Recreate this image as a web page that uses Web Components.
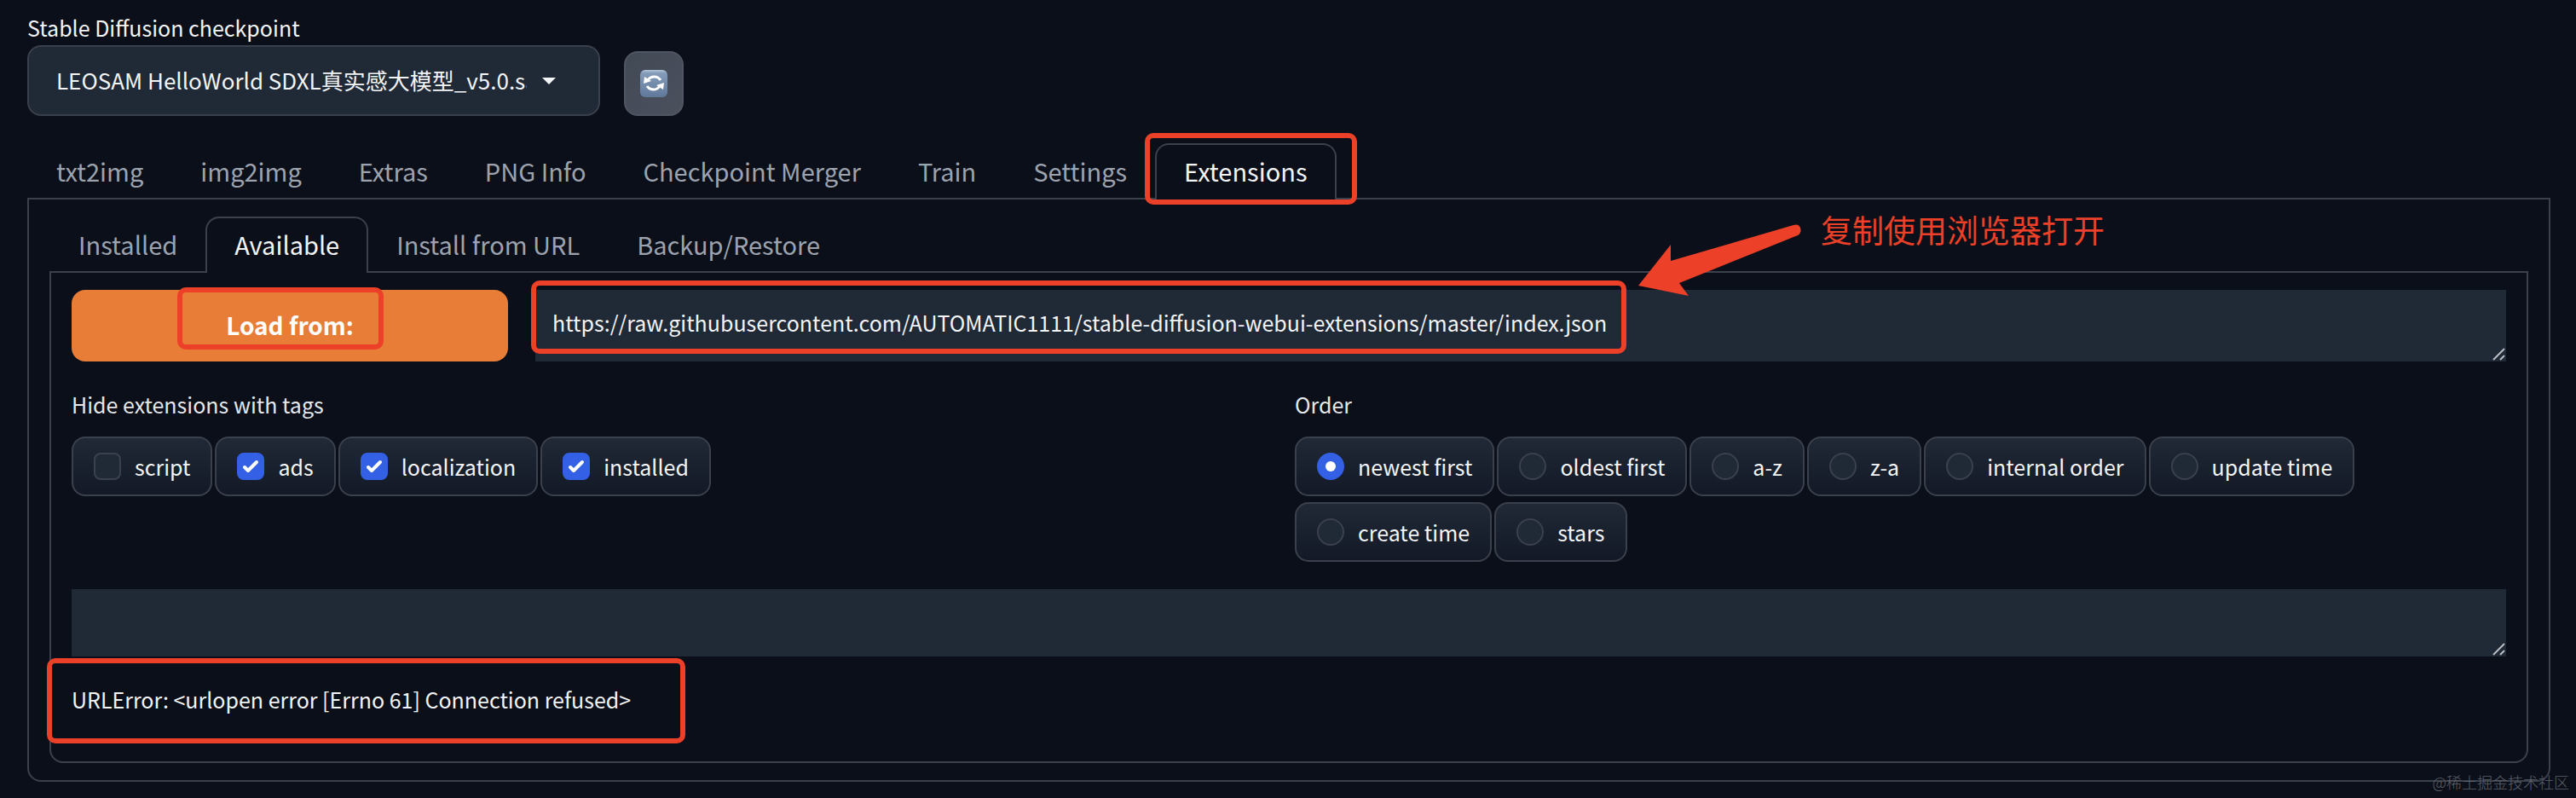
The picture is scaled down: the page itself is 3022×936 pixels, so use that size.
<!DOCTYPE html>
<html lang="en">
<head>
<meta charset="utf-8">
<title>Stable Diffusion</title>
<style>
:root {
    --bg: #0b0f19;
    --field: #202936;
    --line: #3b414c;
    --text: #f3f4f6;
    --muted: #9ca3af;
    --accent: #3360e4;
    --primary: #e87d37;
    --callout: #ec4028;
}
body {
    margin: 0;
    min-height: 100vh;
    background: var(--bg);
    color: var(--text);
    font: 25px/36px "Noto Sans CJK SC", sans-serif;
}
</style>
</head>
<body>
<sd-app></sd-app>

<script>
function attach(element, html) {
    const template = document.createElement("template")
    template.innerHTML = html
    element.attachShadow({ mode: "open" })
    element.shadowRoot.appendChild(template.content.cloneNode(true))
}

// Red frame drawn over whatever positioned box holds it
class CalloutBox extends HTMLElement {
    constructor() {
        super()
        attach(this, `
            <style>
            :host {
                position: absolute;
                box-sizing: border-box;
                border: 6px solid var(--callout);
                border-radius: 10px;
                pointer-events: none;
                z-index: 2;
            }
            </style>
        `)
    }
}

class CalloutNote extends HTMLElement {
    constructor() {
        super()
        attach(this, `
            <style>
            :host {
                position: absolute;
                display: flex;
                align-items: flex-start;
                gap: 22px;
                color: var(--callout);
                font-size: 37px;
                line-height: 44px;
                white-space: nowrap;
                pointer-events: none;
                z-index: 2;
            }
            svg {
                margin-top: 16px;
            }
            </style>
            <svg width="192" height="84" viewBox="0 0 192 84" fill="currentColor" aria-hidden="true">
                <path d="M0 72 38 24 38 43 182 1Q188-1 190 4 192 10 187 13L48 69 59 84Z"/>
            </svg>
            <slot></slot>
        `)
    }
}

class UiSelect extends HTMLElement {
    constructor() {
        super()
        attach(this, `
            <style>
            :host {
                display: flex;
                flex-direction: column;
                gap: 3px;
                flex: 0 0 672px;
            }
            .box {
                display: grid;
                align-items: center;
                height: 83px;
                box-sizing: border-box;
                border: 2px solid var(--line);
                border-radius: 16px;
                background: var(--field);
            }
            select, svg {
                grid-area: 1 / 1;
            }
            select {
                appearance: none;
                height: 100%;
                min-width: 0;
                margin: 0 84px 0 32px;
                padding: 0 0 2px;
                border: 0;
                outline: 0;
                background: none;
                color: inherit;
                font: inherit;
                font-size: 26px;
            }
            svg {
                justify-self: end;
                margin-right: 50px;
                pointer-events: none;
            }
            </style>
            <label for="select"></label>
            <div class="box">
                <select id="select"><option></option></select>
                <svg width="16" height="8" viewBox="0 0 16 8" fill="currentColor" aria-hidden="true"><path d="M0 0H16L8 8Z"/></svg>
            </div>
        `)
        this.shadowRoot.querySelector("label").textContent = this.getAttribute("label")
        this.shadowRoot.querySelector("option").textContent = this.getAttribute("value")
    }
}

class RefreshButton extends HTMLElement {
    constructor() {
        super()
        attach(this, `
            <style>
            :host {
                display: block;
            }
            button {
                display: grid;
                place-items: center;
                width: 70px;
                height: 76px;
                padding: 0;
                border: 2px solid #4f5562;
                border-radius: 16px;
                background: linear-gradient(to bottom right, #424a56, #4b505d);
            }
            </style>
            <button aria-label="Refresh">
                <svg width="32" height="32" viewBox="0 0 32 32" fill="none">
                    <defs>
                        <linearGradient id="tile" x2="0" y2="1">
                            <stop stop-color="#b4c6d8"/>
                            <stop offset=".12" stop-color="#849bb8"/>
                            <stop offset="1" stop-color="#60789a"/>
                        </linearGradient>
                    </defs>
                    <rect width="32" height="32" rx="6" fill="url(#tile)"/>
                    <path d="M24 12A9 9 0 0 0 9 12M8 19A9 9 0 0 0 23 19" stroke="#fff" stroke-width="3"/>
                    <path d="M4 16 5 8 13 13ZM28 15 27 23 19 18Z" fill="#fff"/>
                </svg>
            </button>
        `)
    }
}

class UiTab extends HTMLElement {
    constructor() {
        super()
        attach(this, `
            <style>
            :host {
                display: block;
                position: relative;
                margin-right: -1px;
            }
            button {
                height: 66px;
                margin: 0;
                padding: 0 32px 4px;
                border: 2px solid transparent;
                border-bottom: 0;
                border-radius: 16px 16px 0 0;
                background: none;
                color: var(--muted);
                font: inherit;
                white-space: nowrap;
            }
            :host([selected]) button {
                border-color: var(--line);
                background: var(--bg);
                color: var(--text);
            }
            </style>
            <button role="tab"><slot></slot></button>
            <slot name="callout"></slot>
        `)
        this.shadowRoot.querySelector("button").setAttribute("aria-selected", this.hasAttribute("selected"))
    }
}

// A row of tabs that sits on the top edge of its framed panel
class UiTabs extends HTMLElement {
    constructor() {
        super()
        attach(this, `
            <style>
            :host {
                display: block;
            }
            nav {
                display: flex;
                position: relative;
                margin-bottom: -2px;
                font-size: 29px;
            }
            section {
                padding: 20px 24px;
                border: 2px solid var(--line);
                border-radius: 0 0 16px 16px;
            }
            </style>
            <nav role="tablist"><slot name="tab"></slot></nav>
            <section><slot></slot></section>
        `)
    }
}

class UiTextbox extends HTMLElement {
    constructor() {
        super()
        attach(this, `
            <style>
            :host {
                display: grid;
                position: relative;
            }
            textarea, svg {
                grid-area: 1 / 1;
            }
            textarea {
                box-sizing: border-box;
                width: 100%;
                height: var(--height, 84px);
                margin: 0;
                padding: 20px;
                border: 0;
                outline: 0;
                resize: none;
                overflow: hidden;
                background: var(--field);
                color: inherit;
                font: inherit;
            }
            svg {
                place-self: end;
                margin: 1px;
                pointer-events: none;
            }
            </style>
            <textarea></textarea>
            <svg width="15" height="15" viewBox="0 0 15 15" stroke="#b9bdc4" stroke-width="2" aria-hidden="true"><path d="M1 14 14 1M9 14 14 9"/></svg>
            <slot></slot>
        `)
        const area = this.shadowRoot.querySelector("textarea")
        area.value = this.getAttribute("value") || ""
        area.setAttribute("aria-label", this.getAttribute("label"))
    }
}

class LoadButton extends HTMLElement {
    constructor() {
        super()
        attach(this, `
            <style>
            :host {
                display: block;
                position: relative;
                flex: 0 0 512px;
            }
            button {
                width: 100%;
                height: 84px;
                padding: 0 0 2px;
                border: 0;
                border-radius: 16px;
                background: var(--primary);
                color: #fff;
                font: inherit;
                font-size: 28px;
                font-weight: 700;
            }
            </style>
            <button><slot></slot></button>
            <slot name="callout"></slot>
        `)
    }
}

class ChoiceGroup extends HTMLElement {
    constructor() {
        super()
        attach(this, `
            <style>
            :host {
                display: block;
                flex: 1 1 0;
                min-width: 0;
            }
            fieldset {
                min-width: 0;
                margin: 0;
                padding: 0;
                border: 0;
            }
            legend {
                margin-bottom: 20px;
                padding: 0;
                color: #e5e7eb;
            }
            .row {
                display: flex;
                flex-wrap: wrap;
                gap: 7px 3px;
            }
            label {
                display: flex;
                align-items: center;
                gap: 16px;
                height: 70px;
                box-sizing: border-box;
                padding: 0 24px;
                border: 2px solid var(--line);
                border-radius: 16px;
                background: linear-gradient(#212936, #131926);
            }
            .mark {
                display: grid;
            }
            .mark > * {
                grid-area: 1 / 1;
            }
            input {
                appearance: none;
                box-sizing: border-box;
                width: 32px;
                height: 32px;
                margin: 0;
                border: 2px solid var(--line);
                border-radius: 8px;
                background: var(--field);
            }
            input[type=radio] {
                border-radius: 50%;
            }
            input:checked {
                border-color: var(--accent);
                background: var(--accent);
            }
            svg {
                display: none;
                pointer-events: none;
            }
            input:checked + svg {
                display: block;
            }
            </style>
            <fieldset>
                <legend></legend>
                <div class="row"></div>
            </fieldset>
        `)
        const type = this.getAttribute("type")
        const checked = this.getAttribute("checked").split(",")
        const icon = type === "radio"
            ? `<circle cx="16" cy="16" r="6" fill="#fff"/>`
            : `<path d="M9 17 13 21 23 11" fill="none" stroke="#fff" stroke-width="4" stroke-linecap="round" stroke-linejoin="round"/>`
        this.shadowRoot.querySelector("legend").textContent = this.getAttribute("label")
        const row = this.shadowRoot.querySelector(".row")
        this.getAttribute("options").split(",").forEach(name => {
            const label = document.createElement("label")
            label.innerHTML = `
                <span class="mark">
                    <input type="${type}" name="choice" value="${name}">
                    <svg width="32" height="32" viewBox="0 0 32 32" aria-hidden="true">${icon}</svg>
                </span>
                <span>${name}</span>
            `
            label.querySelector("input").checked = checked.includes(name)
            row.appendChild(label)
        })
    }
}

class SdApp extends HTMLElement {
    constructor() {
        super()
        attach(this, `
            <style>
            :host {
                display: block;
                position: relative;
                box-sizing: border-box;
                min-height: 100vh;
                padding: 14px 30px 19px 32px;
            }
            header {
                display: flex;
                align-items: flex-end;
                gap: 28px;
                margin-bottom: 32px;
            }
            .load, .filters {
                display: flex;
            }
            .load {
                position: relative;
                gap: 32px;
                margin-bottom: 32px;
            }
            .load ui-textbox {
                flex: 1;
            }
            .filters {
                gap: 14px;
                margin-bottom: 32px;
            }
            .log {
                --height: 79px;
            }
            .error {
                position: relative;
                margin: 32px 0 35px;
            }
            .watermark {
                position: absolute;
                right: 8px;
                bottom: 7px;
                color: #5b5f67;
                font-size: 18px;
                font-weight: 300;
                line-height: 24px;
            }
            .on-tab { inset: -12px -24px -6px -12px; }
            .on-load { inset: -3px 146px 14px 124px; }
            .on-url { top: -11px; bottom: 9px; left: -5px; width: 1285px; }
            .on-error { top: -30px; bottom: -34px; left: -29px; width: 749px; }
            .note { top: -93px; left: 1838px; }
            </style>
            <header>
                <ui-select label="Stable Diffusion checkpoint" value="LEOSAM HelloWorld SDXL真实感大模型_v5.0.safetensors"></ui-select>
                <refresh-button></refresh-button>
            </header>
            <ui-tabs>
                <ui-tab slot="tab">txt2img</ui-tab>
                <ui-tab slot="tab">img2img</ui-tab>
                <ui-tab slot="tab">Extras</ui-tab>
                <ui-tab slot="tab">PNG Info</ui-tab>
                <ui-tab slot="tab">Checkpoint Merger</ui-tab>
                <ui-tab slot="tab">Train</ui-tab>
                <ui-tab slot="tab">Settings</ui-tab>
                <ui-tab slot="tab" selected>Extensions<callout-box slot="callout" class="on-tab"></callout-box></ui-tab>
                <ui-tabs>
                    <ui-tab slot="tab">Installed</ui-tab>
                    <ui-tab slot="tab" selected>Available</ui-tab>
                    <ui-tab slot="tab">Install from URL</ui-tab>
                    <ui-tab slot="tab">Backup/Restore</ui-tab>
                    <div class="load">
                        <load-button>Load from:<callout-box slot="callout" class="on-load"></callout-box></load-button>
                        <ui-textbox label="Extension index URL" value="https://raw.githubusercontent.com/AUTOMATIC1111/stable-diffusion-webui-extensions/master/index.json">
                            <callout-box class="on-url"></callout-box>
                        </ui-textbox>
                        <callout-note class="note">复制使用浏览器打开</callout-note>
                    </div>
                    <div class="filters">
                        <choice-group type="checkbox" label="Hide extensions with tags" options="script,ads,localization,installed" checked="ads,localization,installed"></choice-group>
                        <choice-group type="radio" label="Order" options="newest first,oldest first,a-z,z-a,internal order,update time,create time,stars" checked="newest first"></choice-group>
                    </div>
                    <ui-textbox class="log" label="Search"></ui-textbox>
                    <div class="error">URLError: &lt;urlopen error [Errno 61] Connection refused&gt;<callout-box class="on-error"></callout-box></div>
                </ui-tabs>
            </ui-tabs>
            <div class="watermark">@稀土掘金技术社区</div>
        `)
    }
}

customElements.define("callout-box", CalloutBox)
customElements.define("callout-note", CalloutNote)
customElements.define("ui-select", UiSelect)
customElements.define("refresh-button", RefreshButton)
customElements.define("ui-tab", UiTab)
customElements.define("ui-tabs", UiTabs)
customElements.define("ui-textbox", UiTextbox)
customElements.define("load-button", LoadButton)
customElements.define("choice-group", ChoiceGroup)
customElements.define("sd-app", SdApp)
</script>
</body>
</html>
